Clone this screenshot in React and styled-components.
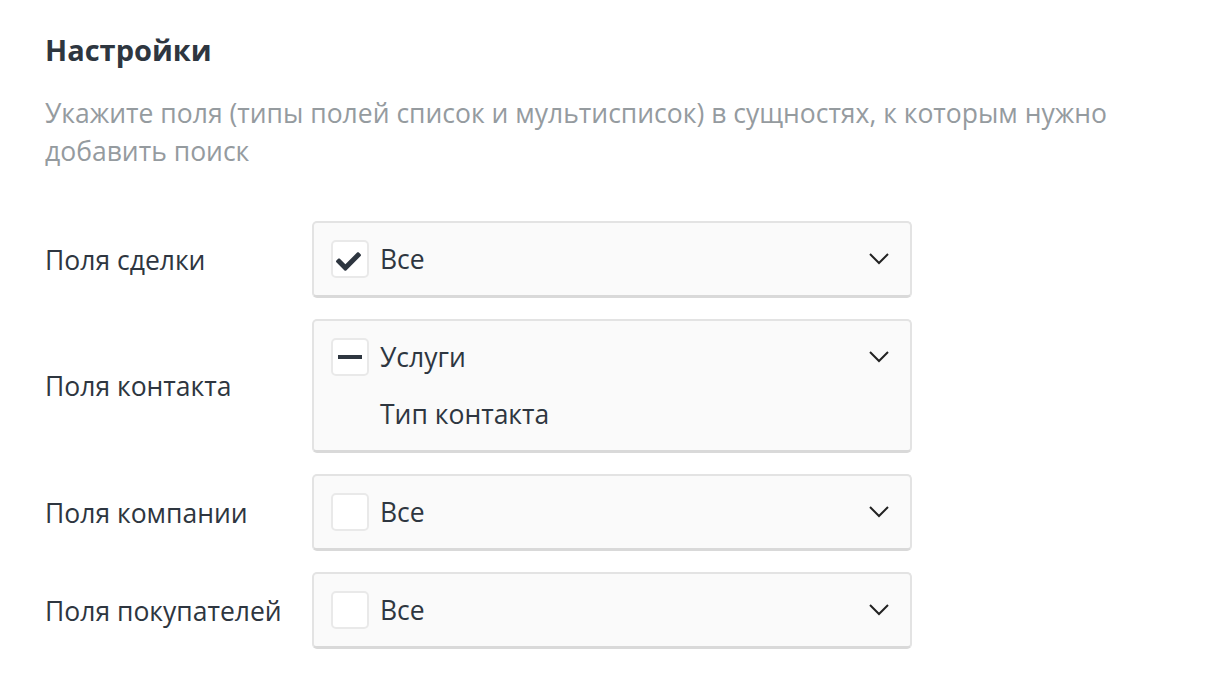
import React from 'react';
import styled, { createGlobalStyle } from 'styled-components';
import { FaCheck } from 'react-icons/fa';

const GlobalStyle = createGlobalStyle`
  body {
    margin: 0;
    background: #ffffff;
    font-family: "Open Sans", "Noto Sans", sans-serif;
    color: #2e3640;
  }
`;

const Page = styled.div`
  padding: 29px 45px;
`;

const Title = styled.h2`
  margin: 0;
  font-size: 29px;
  font-weight: 700;
  line-height: 41px;
  color: #2e3640;
`;

const Hint = styled.p`
  margin: 24px 0 0;
  max-width: 1100px;
  font-size: 26.5px;
  line-height: 38px;
  color: #959b9f;
`;

const Fields = styled.div`
  display: flex;
  flex-direction: column;
  gap: 21px;
  margin-top: 51px;
`;

const FieldRow = styled.div`
  display: grid;
  grid-template-columns: 267px 600px;
  align-items: center;
`;

const Label = styled.div`
  font-size: 26.5px;
  color: #2e3640;
`;

const Select = styled.div`
  box-sizing: border-box;
  display: grid;
  grid-template-columns: 1fr auto;
  align-items: start;
  padding: 17px 21px 17px 17px;
  background: #fafafa;
  border: 2px solid #e3e3e3;
  border-bottom: 3px solid #d9d9d9;
  border-radius: 5px;
`;

const Options = styled.div`
  display: flex;
  flex-direction: column;
  gap: 19px;
`;

const Option = styled.div`
  display: flex;
  align-items: center;
  gap: 11px;
  height: 38px;
  font-size: 26.5px;
  color: #2e3640;
  padding-left: ${(p) => (p.indent ? '49px' : '0')};
`;

const Box = styled.span`
  box-sizing: border-box;
  display: flex;
  align-items: center;
  justify-content: center;
  width: 38px;
  height: 38px;
  background: #ffffff;
  border: 2px solid #e9e9e9;
  border-radius: 5px;
  color: #2e3640;
`;

const Dash = styled.span`
  display: block;
  width: 24px;
  height: 4px;
  background: #2e3640;
`;

const Chevron = styled.svg`
  width: 20px;
  height: 38px;
`;

function Arrow() {
  return (
    <Chevron viewBox="0 0 20 38">
      <polyline points="1,14 10,23 19,14" fill="none" stroke="#222" strokeWidth="2" />
    </Chevron>
  );
}

function Checkbox({ state }) {
  return (
    <Box>
      {state === 'all' && <FaCheck size={25} style={{ marginTop: 5, marginLeft: -3 }} />}
      {state === 'some' && <Dash />}
    </Box>
  );
}

const fields = [
  { label: 'Поля сделки', state: 'all', items: ['Все'] },
  { label: 'Поля контакта', state: 'some', items: ['Услуги', 'Тип контакта'] },
  { label: 'Поля компании', state: 'none', items: ['Все'] },
  { label: 'Поля покупателей', state: 'none', items: ['Все'] },
];

export default function App() {
  return (
    <Page>
      <GlobalStyle />
      <Title>Настройки</Title>
      <Hint>
        Укажите поля (типы полей список и мультисписок) в сущностях, к которым нужно
        добавить поиск
      </Hint>
      <Fields>
        {fields.map((f) => (
          <FieldRow key={f.label}>
            <Label>{f.label}</Label>
            <Select>
              <Options>
                {f.items.map((item, i) => (
                  <Option key={item} indent={i > 0}>
                    {i === 0 && <Checkbox state={f.state} />}
                    {item}
                  </Option>
                ))}
              </Options>
              <Arrow />
            </Select>
          </FieldRow>
        ))}
      </Fields>
    </Page>
  );
}
